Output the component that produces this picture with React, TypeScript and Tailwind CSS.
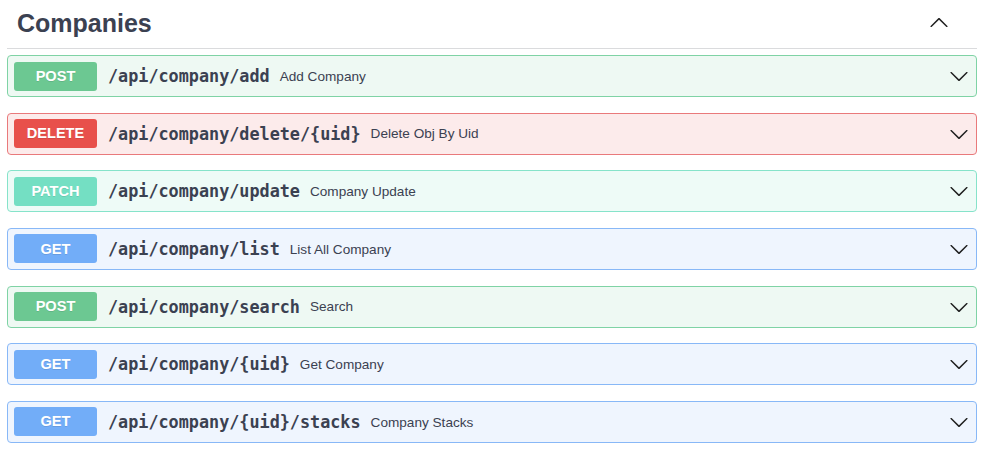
import React from "react";

type Op = {
  method: string;
  path: string;
  desc: string;
};

const ops: Op[] = [
  { method: "POST", path: "/api/company/add", desc: "Add Company" },
  { method: "DELETE", path: "/api/company/delete/{uid}", desc: "Delete Obj By Uid" },
  { method: "PATCH", path: "/api/company/update", desc: "Company Update" },
  { method: "GET", path: "/api/company/list", desc: "List All Company" },
  { method: "POST", path: "/api/company/search", desc: "Search" },
  { method: "GET", path: "/api/company/{uid}", desc: "Get Company" },
  { method: "GET", path: "/api/company/{uid}/stacks", desc: "Company Stacks" },
];

const styles: Record<string, { row: string; badge: string }> = {
  POST: { row: "bg-[#eef9f3] border-[#7fd3a5]", badge: "bg-[#6cc892]" },
  DELETE: { row: "bg-[#fcebeb] border-[#e9797b]", badge: "bg-[#e8504b]" },
  PATCH: { row: "bg-[#eefbf7] border-[#86e3ca]", badge: "bg-[#74dfc3]" },
  GET: { row: "bg-[#eff5fe] border-[#88b8f7]", badge: "bg-[#72adf8]" },
};

function Chevron({ up = false }: { up?: boolean }) {
  return (
    <svg
      width="20"
      height="20"
      viewBox="0 0 20 20"
      className={up ? "rotate-180" : ""}
      fill="#1f1f1f"
    >
      <path d="M17.418 6.109c.272-.268.709-.268.979 0s.271.701 0 .969l-7.908 7.83c-.27.268-.707.268-.979 0l-7.908-7.83c-.27-.268-.27-.701 0-.969.271-.268.709-.268.979 0L10 13.25l7.418-7.141z" />
    </svg>
  );
}

export default function App() {
  return (
    <div
      className="w-[988px] h-[456px] bg-white pl-[7px] pr-[11px] text-[#3b4151] overflow-hidden"
      style={{ fontFamily: '"Liberation Sans", Arial, sans-serif' }}
    >
      <div className="h-[49px] flex items-center justify-between pl-[10px] pr-[28px] border-b border-[#dadbdd]">
        <h3 className="text-[25px] font-bold leading-none pb-[2px]">Companies</h3>
        <div className="pb-[3px]">
          <Chevron up />
        </div>
      </div>
      <div className="mt-[6px] flex flex-col gap-[15.67px]">
        {ops.map((op, i) => {
          const s = styles[op.method];
          return (
            <div
              key={i}
              className={`h-[42px] border rounded-[4px] flex items-center pl-[6px] pr-[7px] ${s.row}`}
            >
              <div
                className={`w-[83px] h-[29px] pt-[1px] rounded-[3px] flex items-center justify-center text-white font-bold text-[14.6px] ${s.badge}`}
                style={{ textShadow: "0 1px 0 rgba(0,0,0,0.1)" }}
              >
                {op.method}
              </div>
              <span
                className="ml-[11px] pt-[1px] font-bold text-[16.8px] text-[#3b4151]"
                style={{ fontFamily: '"DejaVu Sans Mono", monospace' }}
              >
                {op.path}
              </span>
              <span className="ml-[10px] pt-[2px] text-[13.6px] text-[#3b4151]">{op.desc}</span>
              <div className="ml-auto">
                <Chevron />
              </div>
            </div>
          );
        })}
      </div>
    </div>
  );
}
